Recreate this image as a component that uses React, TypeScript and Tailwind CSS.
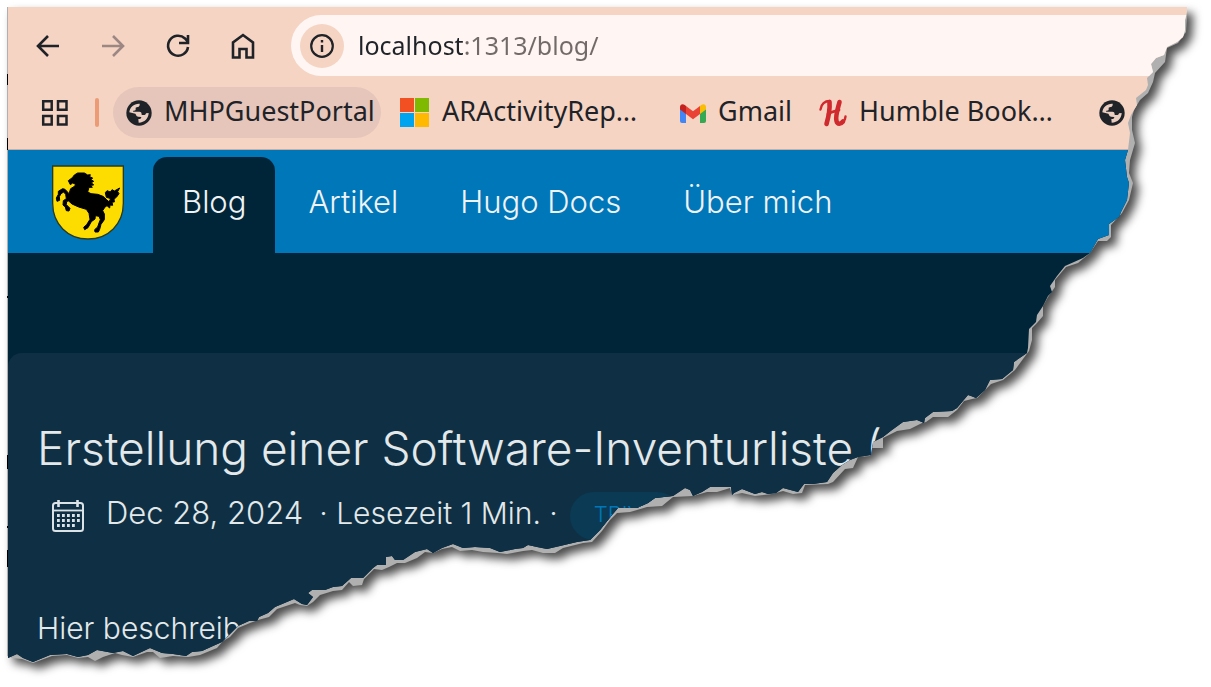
import type { ReactNode } from 'react';

const PAGE_EDGE =
  'M8 7 L1187 7 1187 12 1185 20 1185 30 1183 37 1177 42 1167 47 1164 55 1156 58 1151 64 1153 72 1147 78 1148 85 1146 90 1136 98 1137 105 1131 115 1128 123 1130 133 1128 150 1125 160 1127 177 1129 183 1127 200 1121 212 1119 217 1109 224 1109 235 1098 239 1090 253 1083 258 1065 266 1057 276 1050 286 1052 292 1048 296 1043 306 1037 315 1036 322 1029 329 1028 348 1027 353 1014 362 1013 370 1002 379 990 380 985 390 976 398 971 396 968 395 957 408 952 411 933 412 925 418 924 423 917 420 903 422 892 430 883 437 873 442 871 455 858 457 850 460 842 465 833 473 827 482 813 484 804 484 798 492 783 488 776 493 768 494 762 492 755 494 742 489 734 493 732 495 731 487 710 487 702 492 693 496 690 490 685 488 673 496 655 498 648 503 637 508 618 508 612 515 600 530 590 540 577 542 560 546 547 549 537 547 528 545 523 548 515 549 500 552 490 548 475 547 463 548 453 544 442 548 433 553 427 549 415 552 403 560 395 560 392 556 386 557 386 565 377 565 373 568 363 578 351 578 342 586 333 587 325 590 312 590 308 593 313 597 307 605 302 604 294 599 275 607 268 613 259 617 257 621 249 621 238 626 230 634 222 642 213 646 202 651 192 652 186 656 173 654 162 653 150 648 133 656 123 651 113 653 97 650 88 655 78 657 67 654 50 655 33 662 23 658 17 654 8 658 Z';

const PAPER_EDGE =
  'M7 7 L1187 7 1187 15 1186 32 1178 43 1167 48 1165 62 1155 73 1153 82 1148 93 1140 100 1134 110 1132 117 1132 130 1135 143 1130 160 1129 173 1133 183 1129 200 1122 213 1111 225 1111 237 1107 241 1098 241 1090 253 1078 263 1066 267 1055 280 1055 287 1048 297 1043 306 1043 316 1037 323 1032 328 1032 340 1029 351 1023 359 1015 370 1003 380 991 384 977 398 972 399 964 401 957 410 948 417 933 417 926 422 922 423 910 429 897 431 883 438 883 448 872 448 870 456 858 457 853 468 845 469 833 482 828 484 805 485 802 493 793 494 783 491 772 494 755 496 742 493 732 495 730 488 717 492 707 492 693 496 673 497 662 506 647 507 637 510 630 512 617 513 610 520 602 531 592 542 583 543 563 548 555 553 543 553 532 550 523 551 507 554 498 553 483 552 472 550 460 551 452 547 442 549 433 553 425 552 417 558 405 563 397 563 389 567 382 570 374 569 364 579 362 585 353 586 349 582 342 590 333 591 320 595 313 602 307 606 300 605 295 603 277 609 269 617 258 620 250 623 238 628 230 637 223 641 217 648 200 655 188 657 173 656 160 658 153 652 147 652 133 657 122 655 115 653 103 657 95 661 88 657 78 658 67 655 52 656 33 663 22 659 12 658 7 656 Z';

function TornPaper() {
  return (
    <svg className="pointer-events-none absolute left-0 top-0" width="1211" height="687" aria-hidden="true">
      <defs>
        <clipPath id="torn" clipPathUnits="userSpaceOnUse">
          <path d={PAGE_EDGE} />
        </clipPath>
      </defs>
      <path
        d={PAPER_EDGE}
        fill="#b0b0b0"
        className="[filter:drop-shadow(6px_6px_5px_rgba(0,0,0,0.7))]"
      />
      <path d="M7.500 74v11M7.500 138v12M7.500 296v2M7.500 455v14M7.500 526v2M7.500 550v17" stroke="#000" strokeWidth="1" />
    </svg>
  );
}

function ToolbarIcon({ label, children, muted = false }: { label: string; children: ReactNode; muted?: boolean }) {
  return (
    <button type="button" aria-label={label} className={muted ? 'text-[#9c8782]' : 'text-[#1f2328]'}>
      <svg width="26" height="26" viewBox="0 0 26 26" fill="none" stroke="currentColor" strokeWidth="2.6">
        {children}
      </svg>
    </button>
  );
}

function GlobeIcon() {
  return (
    <svg width="26" height="26" viewBox="16 16 78 78" className="shrink-0" aria-hidden="true">
      <circle cx="55" cy="55" r="38" fill="#1f2328" />
      <path
        fill="#e9cdc1"
        d="M26 53C27 38 40 26 57 27L57 32Q56 38 48 38L45 39V45Q45 48 38 48L37 51H56Q63 51 63 58V61H72Q76 59 76 56L84 55C84 70 72 84 54 84L53 73H58Q62 72 62 67L52 66Q46 65 46 60L44 57Z"
      />
    </svg>
  );
}

function WindowsTiles() {
  return (
    <svg width="30" height="30" viewBox="0 0 30 30" className="shrink-0" aria-hidden="true">
      <path fill="#f25022" d="M0 0h14v14H0z" />
      <path fill="#7fba00" d="M15 0h14v14H15z" />
      <path fill="#00a4ef" d="M0 15h14v14H0z" />
      <path fill="#ffb900" d="M15 15h14v14H15z" />
    </svg>
  );
}

function GmailIcon() {
  return (
    <svg width="26" height="26" viewBox="0 0 26 26" className="shrink-0" aria-hidden="true">
      <path fill="#4285f4" d="M0 8l6 4v11H2a2 2 0 0 1-2-2z" />
      <path fill="#34a853" d="M26 8l-6 4v11h4a2 2 0 0 0 2-2z" />
      <path fill="#fbbc04" d="M20 6l1.200-1C23.500 3.300 26 4.500 26 7v2.500L20 14z" />
      <path fill="#c5221f" d="M6 6L4.800 5C2.500 3.300 0 4.500 0 7v2.500L6 14z" />
      <path fill="#ea4335" d="M6 6l7 5.300L20 6v8l-7 5.300L6 14z" />
    </svg>
  );
}

function HumbleIcon() {
  return (
    <svg width="28" height="28" viewBox="0 0 28 28" fill="none" stroke="#cf2a2d" strokeLinecap="round" className="shrink-0" aria-hidden="true">
      <path strokeWidth="2.400" d="M1.500 10.500C2 5 6 1.800 11 2" />
      <path strokeWidth="4.600" d="M10.500 3C11 9 9.500 18 7.500 25" />
      <path strokeWidth="2.800" d="M9 15C13 12 16 13 20 11" />
      <path strokeWidth="4.600" d="M20.500 3C19 9 16 18 17.500 22C18.500 26 22 25 24 22.500" />
      <path strokeWidth="2.400" d="M24 23C26 21 26.500 19 26.500 17.500" />
    </svg>
  );
}

function CoatOfArms() {
  return (
    <svg width="72" height="75" viewBox="21 13 216 225" role="img" aria-label="Wappen">
      <path
        d="M23 16H235V128C235 190 190 235 129 235C68 235 23 190 23 128Z"
        fill="#fddc00"
        stroke="#2a3a22"
        strokeWidth="4"
      />
      <path
        fill="#000"
        stroke="#000"
        strokeWidth="3"
        strokeLinejoin="round"
        d="M70 60L82 51L88 43L98 37L118 37L128 43L136 42L134 48L143 52L138 57L146 62L139 66L146 73L137 74L142 80L132 80L128 94L138 99L158 101L174 107L184 116L190 122L196 119L195 113L184 110L181 96L186 90L196 94L201 87L208 91L224 82L218 93L222 99L214 110L207 115L208 124L201 124L203 134L195 133L194 142L186 135L180 139L173 150L178 160V177L168 191L164 206L160 214L150 214L149 207L158 199L162 187L166 177L162 167L151 165L150 175L139 183L129 201L119 207L116 200L125 192L135 176L132 158L124 146L101 139L81 130L71 121L65 122L64 132L75 143L72 151L64 150L61 139L54 133L55 120L64 114L62 101L56 94L48 99L43 108L44 119L36 122L34 112L40 101V92L53 84L60 86L72 99L77 84L90 76L91 70L83 67L76 72Z"
      />
    </svg>
  );
}

function CalendarIcon() {
  return (
    <svg width="32" height="32" viewBox="0 0 32 32" fill="none" stroke="#dce3e6" aria-hidden="true">
      <rect x="1" y="3" width="30" height="28" rx="2.500" strokeWidth="2" />
      <path strokeWidth="1.800" d="M1 10.500h30" />
      <path strokeWidth="2.600" d="M6.500 0v7M25.500 0v7" />
      <path strokeWidth="2.800" strokeDasharray="2.800 2.200" d="M5 15.500h23M5 20.500h23M5 25.500h18" />
    </svg>
  );
}

const CHIP = 'flex h-[51px] shrink-0 items-center gap-3 overflow-hidden rounded-full pl-[13px] pr-2';

function Bookmark({ icon, label, className }: { icon: ReactNode; label: string; className: string }) {
  return (
    <a href="#" className={`${CHIP} ${className}`}>
      {icon}
      <span className="whitespace-nowrap pb-[2px]">{label}</span>
    </a>
  );
}

function Browser() {
  return (
    <div className="bg-[#f5d4c3] font-['Noto_Sans',sans-serif] text-[#1f2328]">
      <div className="flex items-center pt-2">
        <div className="flex w-[283px] shrink-0 items-center gap-[39px] pl-[27px]">
          <ToolbarIcon label="Zurück">
            <path d="M24 13H3M13 3L3 13l10 10" />
          </ToolbarIcon>
          <ToolbarIcon label="Vorwärts" muted>
            <path d="M2 13h21M13 3l10 10-10 10" />
          </ToolbarIcon>
          <ToolbarIcon label="Neu laden">
            <path d="M23 14a10 10 0 1 1-3-8.500L23 9M23 2v8h-9" />
          </ToolbarIcon>
          <ToolbarIcon label="Startseite">
            <path d="M3 24.500V9.500L13 2l10 7.500v15h-6.500V16h-7v8.500z" />
          </ToolbarIcon>
        </div>
        <div className="flex h-[61px] min-w-0 grow items-center gap-[14px] rounded-l-full bg-[#fff6f3] pl-[9px]">
          <button
            type="button"
            aria-label="Website-Informationen"
            className="flex size-[44px] shrink-0 items-center justify-center rounded-full bg-[#f5d4c3]"
          >
            <svg width="24" height="24" viewBox="0 0 24 24" fill="none" stroke="#1f2328" strokeWidth="2.200">
              <circle cx="12" cy="12" r="10.800" />
              <path d="M12 11v7M12 6v2.400" strokeWidth="2.400" />
            </svg>
          </button>
          <input
            aria-label="Adresse"
            defaultValue="localhost:1313/blog/"
            className="h-[44px] min-w-0 grow bg-[linear-gradient(90deg,#1f2328_105px,#716a68_105px)] bg-clip-text pb-[2px] text-[25px] text-transparent outline-none"
          />
        </div>
      </div>
      <div className="flex items-center gap-[6px] pb-[11px] pt-[11px] text-[27px]">
        <button type="button" aria-label="Tab-Gruppen" className="ml-[33px] shrink-0">
          <svg width="28" height="28" viewBox="0 0 28 28" fill="none" stroke="#1f2328" strokeWidth="2.500">
            <path d="M2.200 2.200h8.500v8.500H2.200zM17 2.200h8.500v8.500H17zM2.200 17h8.500v8.500H2.200zM17 17h8.500v8.500H17z" />
          </svg>
        </button>
        <span className="ml-5 mr-2 h-[29px] w-1 shrink-0 rounded-full bg-[#eb9c74]" />
        <Bookmark icon={<GlobeIcon />} label="MHPGuestPortal" className="w-[268px] bg-[#e6c6ba]" />
        <Bookmark icon={<WindowsTiles />} label="ARActivityRep…" className="w-[274px]" />
        <Bookmark icon={<GmailIcon />} label="Gmail" className="w-[133px]" />
        <Bookmark icon={<HumbleIcon />} label="Humble Book…" className="w-[274px]" />
        <a href="#" aria-label="Lesezeichen" className={CHIP}>
          <GlobeIcon />
        </a>
      </div>
      <div className="h-px bg-[#c9aea5]" />
    </div>
  );
}

const TAB = 'flex h-24 items-center rounded-t-[14px] px-[29px] pb-[6px]';

function SiteNav() {
  return (
    <nav className="flex h-[103px] items-end gap-1 bg-[#0077b9] pl-11 text-[31px] font-light text-[#f0f3f5]">
      <a href="#" className="mb-[13px] mr-[25px] shrink-0">
        <CoatOfArms />
      </a>
      <a href="#" aria-current="page" className={`${TAB} bg-[#002538]`}>
        Blog
      </a>
      <a href="#" className={TAB}>
        Artikel
      </a>
      <a href="#" className={TAB}>
        <span className="whitespace-nowrap">Hugo Docs</span>
      </a>
      <a href="#" className={TAB}>
        <span className="whitespace-nowrap">Über mich</span>
      </a>
    </nav>
  );
}

export default function App() {
  return (
    <div className="relative min-h-screen overflow-hidden bg-white">
      <TornPaper />
      <div className="relative flex min-h-screen flex-col pl-2 pt-[7px] [clip-path:url(#torn)]">
        <Browser />
        <div className="flex grow flex-col bg-[#002538] font-['Inter',sans-serif]">
          <SiteNav />
          <main className="mt-[100px] grow rounded-tl-[14px] bg-[#0f3044] pl-[29px] pt-[60px] font-light text-[#e3e8ea]">
            <article>
              <h1 className="whitespace-nowrap text-[46px] leading-[70px]">
                Erstellung einer Software-Inventurliste (S
              </h1>
              <div className="mt-[7px] flex h-[52px] items-center whitespace-nowrap text-[31px]">
                <span className="ml-[15px] mr-[22px]">
                  <CalendarIcon />
                </span>
                <time dateTime="2024-12-28" className="pb-[6px]">
                  Dec 28, 2024
                </time>
                <span className="ml-4 pb-[6px] text-[30px]">· Lesezeit 1 Min. ·</span>
                <a href="#" className="ml-3 flex h-12 items-center rounded-full bg-[#0b3a54] px-6 pb-1 text-[22px] text-[#0077b9]">
                  TRIVY
                </a>
              </div>
              <p className="mt-16 whitespace-nowrap text-[30px] leading-[44px]">Hier beschreibe</p>
            </article>
          </main>
        </div>
      </div>
    </div>
  );
}
